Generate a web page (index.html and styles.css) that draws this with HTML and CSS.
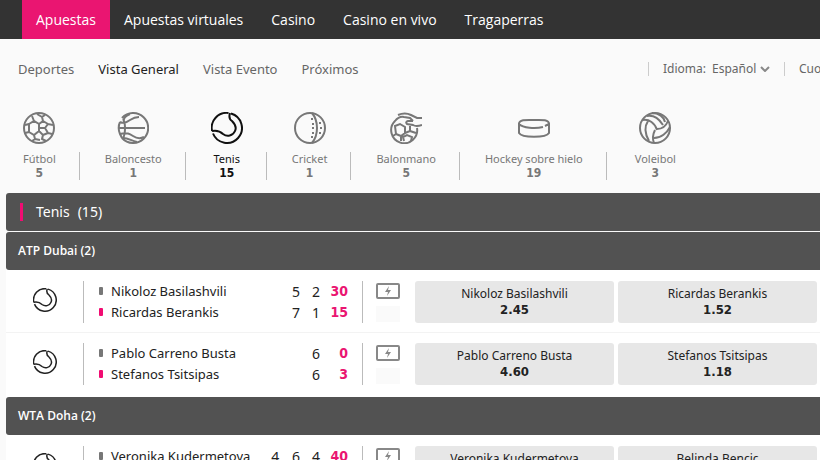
FILE: index.html
```html
<!DOCTYPE html>
<html lang="es">
<head>
    <meta charset="UTF-8">
    <meta name="viewport" content="width=device-width, initial-scale=1.0">
    <title>Apuestas - Tenis</title>
    <link rel="stylesheet" href="styles.css">
</head>
<body>
<!-- Icon sprite -->
<svg class="sprite" aria-hidden="true">
    <symbol id="icon-football" viewBox="0 0 32 32">
        <circle cx="16" cy="16" r="15"/>
        <path d="M6 12l5-3 5 3v7l-5 4-5-3zM16 16h6M22 16l3-4 5 1M22 16l3 5 4 1M11 9l-2-5M16 12l4-3-1-4 3-2M20 9l5 3M11 23l1 4-3 2M16 19l4 4-1 4 4 2M20 23l5-2M6 12l-4 1M6 20l-4 1M12 27l5 1M14 2l5 3"/>
    </symbol>
    <symbol id="icon-basketball" viewBox="0 0 32 32">
        <path d="M5 6A15 15 0 1 1 5 26M3 10a15 15 0 0 0 0 12l2 4M1 16h27"/>
        <path d="M6 7c2 3 2 5 2 9s0 7-2 10M13 2C8 4 6 7 7 10M3 10c4 2 7 0 10-2s6-3 9-3M3 22c7-2 10 0 13 2s7 3 11 1M6 26c6 0 8 3 14 4"/>
    </symbol>
    <symbol id="icon-tennis" viewBox="0 0 32 32">
        <path d="M20 1.500A15 15 0 1 1 2 21.500M17.500 1A15 15 0 0 0 1 19M19 1c-1 3-1 6 2 8 3 3 5 6 3 10-2 5-8 6-12 3-3-3-6-4-11-3"/>
    </symbol>
    <symbol id="icon-cricket" viewBox="0 0 32 32">
        <circle cx="16" cy="16" r="15"/>
        <path d="M18 1q5 6 5 15t-5 15M17 7h2M18 12h2M18 16h2M18 21h2M17 25h2M25 11h2M26 16h2M25 21h2"/>
    </symbol>
    <symbol id="icon-handball" viewBox="0 0 32 32">
        <path d="M5 9a13 13 0 1 0 22 7M5 9q4-5 9-4l6 1 3 3M8 3q7-3 13 0l6 3h5M23 9h-5q-3 1-1 3l6 1q3 2 9 0"/>
        <path d="M5 14l5-2 5 3v6l-4 3-5-2zM15 21l5-2v-5M20 19l6 2M6 22l-3 2M11 24v5M14 29l-1-4 4-2 5 2-1 4"/>
    </symbol>
    <symbol id="icon-puck" viewBox="0 0 32 32">
        <path d="M25 15c-8 2-20 1-24-3C1 7 10 8 16 8s15-1 15 4l-4 2M1 11v10c3 5 27 5 30 0V11"/>
    </symbol>
    <symbol id="icon-volleyball" viewBox="0 0 32 32">
        <circle cx="16" cy="16" r="15"/>
        <path d="M4 8c6-1 12 3 14 10M8 4c8-1 12 3 16 9M13 1c7 0 12 4 13 9M18 17c5 0 9-3 11-8M15 26c7 0 13-5 16-11M16 18c-2 4-3 8-1 13M9 9c-4 6-3 13 1 20"/>
    </symbol>
    <symbol id="icon-live" viewBox="0 0 24 16">
        <rect x="1" y="1" width="22" height="14" rx="1"/>
        <path class="bolt" d="M13 3l-4 6h3l-1 4 4-6h-3z"/>
    </symbol>
</svg>

<header class="topbar">
    <nav class="main-nav">
        <a class="active" href="#">Apuestas</a>
        <a href="#">Apuestas virtuales</a>
        <a href="#">Casino</a>
        <a href="#">Casino en vivo</a>
        <a href="#">Tragaperras</a>
    </nav>
</header>

<div class="subbar">
    <nav class="sub-nav">
        <a href="#">Deportes</a>
        <a class="active" href="#">Vista General</a>
        <a href="#">Vista Evento</a>
        <a href="#">Próximos</a>
    </nav>
    <div class="settings">
        <div class="setting">
            <label for="language">Idioma:</label>
            <select id="language"><option>Español</option></select>
            <svg class="chevron" viewBox="0 0 10 6"><path d="M1 1l4 4 4-4"/></svg>
        </div>
        <div class="setting">Cuotas</div>
    </div>
</div>

<nav class="sports">
    <a href="#"><svg class="icon"><use href="#icon-football"/></svg><span>Fútbol</span><b>5</b></a>
    <a href="#"><svg class="icon"><use href="#icon-basketball"/></svg><span>Baloncesto</span><b>1</b></a>
    <a class="active" href="#"><svg class="icon"><use href="#icon-tennis"/></svg><span>Tenis</span><b>15</b></a>
    <a href="#"><svg class="icon"><use href="#icon-cricket"/></svg><span>Cricket</span><b>1</b></a>
    <a href="#"><svg class="icon"><use href="#icon-handball"/></svg><span>Balonmano</span><b>5</b></a>
    <a href="#"><svg class="icon"><use href="#icon-puck"/></svg><span>Hockey sobre hielo</span><b>19</b></a>
    <a href="#"><svg class="icon"><use href="#icon-volleyball"/></svg><span>Voleibol</span><b>3</b></a>
</nav>

<main class="events">
    <h1 class="sport-title">Tenis <span>(15)</span></h1>

    <section class="league">
        <h2>ATP Dubai (2)</h2>
        <div class="match">
            <svg class="icon match-icon"><use href="#icon-tennis"/></svg>
            <table class="score">
                <tr><th>Nikoloz Basilashvili</th><td></td><td>5</td><td>2</td><td class="points">30</td></tr>
                <tr class="serving"><th>Ricardas Berankis</th><td></td><td>7</td><td>1</td><td class="points">15</td></tr>
            </table>
            <div class="media"><svg class="icon live"><use href="#icon-live"/></svg><i></i></div>
            <div class="odds">
                <button>Nikoloz Basilashvili<b>2.45</b></button>
                <button>Ricardas Berankis<b>1.52</b></button>
            </div>
        </div>
        <div class="match">
            <svg class="icon match-icon"><use href="#icon-tennis"/></svg>
            <table class="score">
                <tr><th>Pablo Carreno Busta</th><td></td><td></td><td>6</td><td class="points">0</td></tr>
                <tr class="serving"><th>Stefanos Tsitsipas</th><td></td><td></td><td>6</td><td class="points">3</td></tr>
            </table>
            <div class="media"><svg class="icon live"><use href="#icon-live"/></svg><i></i></div>
            <div class="odds">
                <button>Pablo Carreno Busta<b>4.60</b></button>
                <button>Stefanos Tsitsipas<b>1.18</b></button>
            </div>
        </div>
    </section>

    <section class="league">
        <h2>WTA Doha (2)</h2>
        <div class="match">
            <svg class="icon match-icon"><use href="#icon-tennis"/></svg>
            <table class="score">
                <tr><th>Veronika Kudermetova</th><td>4</td><td>6</td><td>4</td><td class="points">40</td></tr>
                <tr class="serving"><th></th><td></td><td></td><td></td><td class="points"></td></tr>
            </table>
            <div class="media"><svg class="icon live"><use href="#icon-live"/></svg><i></i></div>
            <div class="odds">
                <button>Veronika Kudermetova</button>
                <button>Belinda Bencic</button>
            </div>
        </div>
    </section>
</main>
</body>
</html>
```
FILE: styles.css
```css
* {
    box-sizing: border-box;
}
body {
    margin: 0;
    background: #fafafa;
    color: #222;
    font-family: "Noto Sans", sans-serif;
    font-size: 13px;
    overflow: hidden;
}
a {
    color: inherit;
    text-decoration: none;
}
.sprite {
    display: none;
}
.icon {
    display: block;
    width: 32px;
    height: 32px;
    fill: none;
    stroke: currentColor;
    stroke-width: 2;
}
.bolt {
    fill: currentColor;
    stroke: none;
}

/* Navigation */
.topbar {
    background: #333;
}
.main-nav {
    display: flex;
    padding-left: 22px;
    color: #fff;
    font-family: "Open Sans", sans-serif;
    font-size: 14px;
    font-weight: 500;
    line-height: 39px;
}
.main-nav a {
    padding: 0 14px;
    white-space: nowrap;
}
.main-nav .active {
    background: #ea1571;
}
.subbar {
    display: flex;
    justify-content: space-between;
    height: 60px;
    line-height: 60px;
    overflow: hidden;
}
.sub-nav {
    display: flex;
    gap: 24px;
    padding-left: 18px;
    color: #666;
    white-space: nowrap;
}
.sub-nav .active {
    color: #222;
}
.settings {
    display: flex;
    align-items: center;
    width: 172px;
    overflow: hidden;
    color: #666;
    font-size: 12px;
    line-height: 14px;
}
.setting {
    display: flex;
    flex: none;
    align-items: center;
    padding: 0 14px;
    border-left: 1px solid #ccc;
}
.setting select {
    width: 48px;
    margin-left: 6px;
    padding: 0;
    border: 0;
    appearance: none;
    background: none;
    color: inherit;
    font: inherit;
    line-height: 14px;
}
.chevron {
    width: 10px;
    height: 6px;
    fill: none;
    stroke: #888;
    stroke-width: 2;
}

/* Sports */
.sports {
    display: flex;
    padding: 13px 0;
    color: #777;
    font-size: 11px;
    line-height: 14px;
}
.sports a {
    display: flex;
    flex-direction: column;
    align-items: center;
    padding: 0 24px 0 25px;
    white-space: nowrap;
    background: linear-gradient(#bbb, #bbb) right bottom / 1px 28px no-repeat;
}
.sports a:first-child {
    padding-left: 23px;
}
.sports a:last-child {
    padding-left: 28px;
    background: none;
}
.sports .icon {
    margin-bottom: 8px;
}
.sports .active {
    color: #111;
}
b,
.points {
    font-family: "DejaVu Sans Condensed", "DejaVu Sans", sans-serif;
    font-weight: bold;
}
.sports b {
    font-size: 12px;
}

/* Events */
.events {
    padding-left: 6px;
}
.sport-title,
.league h2 {
    margin: 0;
    border-radius: 3px 0 0 3px;
    background: #525252;
    color: #fff;
    line-height: 38px;
}
.sport-title {
    display: flex;
    align-items: center;
    gap: 8px;
    margin-bottom: 1px;
    padding-left: 14px;
    font-size: 14px;
    font-weight: normal;
}
.sport-title::before {
    width: 3px;
    height: 18px;
    margin-right: 5px;
    background: #f10c72;
    content: "";
}
.league {
    padding-bottom: 3px;
    background: #fff;
}
.league h2 {
    padding-left: 12px;
    font-family: "Open Sans", sans-serif;
    font-size: 12px;
    font-weight: 600;
}
.match {
    display: flex;
    height: 62px;
    padding-top: 11px;
}
.match + .match {
    border-top: 1px solid #f3f3f3;
    padding-top: 10px;
}
.match-icon {
    width: 24px;
    height: 24px;
    margin: 7px 26px 0 27px;
}
.score {
    width: 265px;
    height: 42px;
    border-collapse: collapse;
    border-left: 1px solid #bbb;
    table-layout: fixed;
}
.score tr {
    height: 21px;
}
.score th {
    width: 176px;
    padding: 0 0 0 15px;
    font-weight: normal;
    line-height: 21px;
    text-align: left;
    white-space: nowrap;
}
.score th::before {
    display: inline-block;
    width: 4px;
    height: 8px;
    margin-right: 8px;
    border-radius: 1px;
    background: #777;
    vertical-align: 1px;
    content: "";
}
.score .serving th::before {
    background: #f10c72;
}
.score td {
    width: 20px;
    padding: 0;
    font-size: 14px;
    line-height: 21px;
    text-align: right;
}
.score .points {
    width: 28px;
    color: #ea1571;
}
.media {
    height: 42px;
    margin: 0 15px 0 14px;
    padding: 2px 0 0 13px;
    border-left: 1px solid #bbb;
    color: #888;
}
.live {
    width: 24px;
    height: 16px;
}
.media i {
    display: block;
    height: 16px;
    margin-top: 7px;
    background: #fafafa;
}
.odds {
    display: flex;
    gap: 4px;
}
.odds button {
    display: flex;
    flex-direction: column;
    align-items: center;
    justify-content: flex-start;
    width: 199px;
    height: 42px;
    padding: 5px 0;
    border: 0;
    border-radius: 3px;
    background: #e7e7e7;
    color: #222;
    font-family: inherit;
    font-size: 12px;
    line-height: 16px;
    cursor: pointer;
}
.odds b {
    font-size: 13px;
}
```
